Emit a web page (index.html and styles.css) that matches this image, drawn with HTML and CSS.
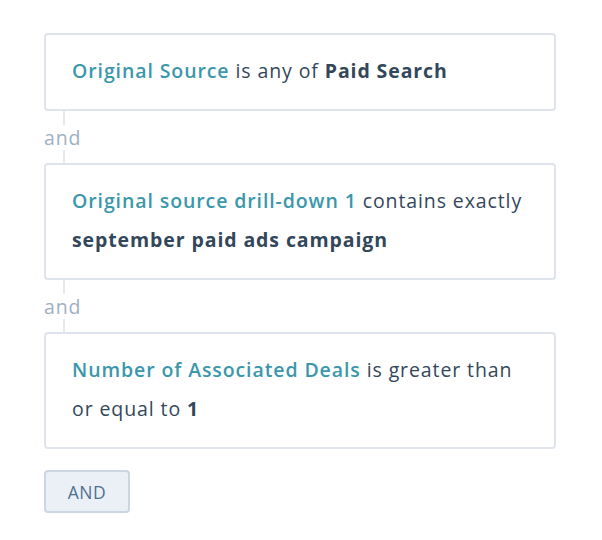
FILE: index.html
```html
<!DOCTYPE html>
<html lang="en">

<head>
    <meta charset="UTF-8">
    <meta name="viewport" content="width=device-width, initial-scale=1.0">
    <title>Filters</title>
    <link rel="stylesheet" href="styles.css">
</head>

<body>
    <div class="filters">
        <div class="filter-card">
            <span class="prop">Original Source</span> is any of <b>Paid Search</b>
        </div>
        <div class="joiner"><span>and</span></div>
        <div class="filter-card">
            <span class="prop">Original source drill-down 1</span> contains exactly <b>september paid ads campaign</b>
        </div>
        <div class="joiner"><span>and</span></div>
        <div class="filter-card">
            <span class="prop">Number of Associated Deals</span> is greater than or equal to <b>1</b>
        </div>
        <button class="add-btn">AND</button>
    </div>
</body>

</html>
```

FILE: styles.css
```css
body {
    font-family: "Open Sans", "Noto Sans", sans-serif;
    background-color: #fff;
    color: #33475b;
    margin: 0;
    padding: 33px 46px 0 44px;
}

.filters {
    display: flex;
    flex-direction: column;
    align-items: flex-start;
}

.filter-card {
    align-self: stretch;
    border: 2px solid #dfe3eb;
    border-radius: 4px;
    padding: 16px 26px 19px;
    font-size: 19.5px;
    letter-spacing: 0.9px;
    line-height: 39px;
}

.prop {
    color: #3b97ab;
    font-weight: 600;
}

.filter-card b {
    font-weight: 700;
}

.joiner {
    height: 52px;
    margin-left: 19px;
    border-left: 2px solid #e5e9f0;
    display: flex;
    align-items: center;
}

.joiner span {
    margin-left: -21px;
    background-color: #fff;
    color: #9fb0c3;
    font-size: 19.5px;
    letter-spacing: 0.9px;
    line-height: 24px;
    padding-top: 1px;
}

.add-btn {
    margin-top: 21px;
    width: 86px;
    height: 43px;
    border: 2px solid #cbd6e2;
    border-radius: 4px;
    background-color: #eaf0f6;
    color: #516f90;
    font-family: "Open Sans", sans-serif;
    font-size: 17.5px;
    letter-spacing: 0.5px;
    cursor: pointer;
}
```
